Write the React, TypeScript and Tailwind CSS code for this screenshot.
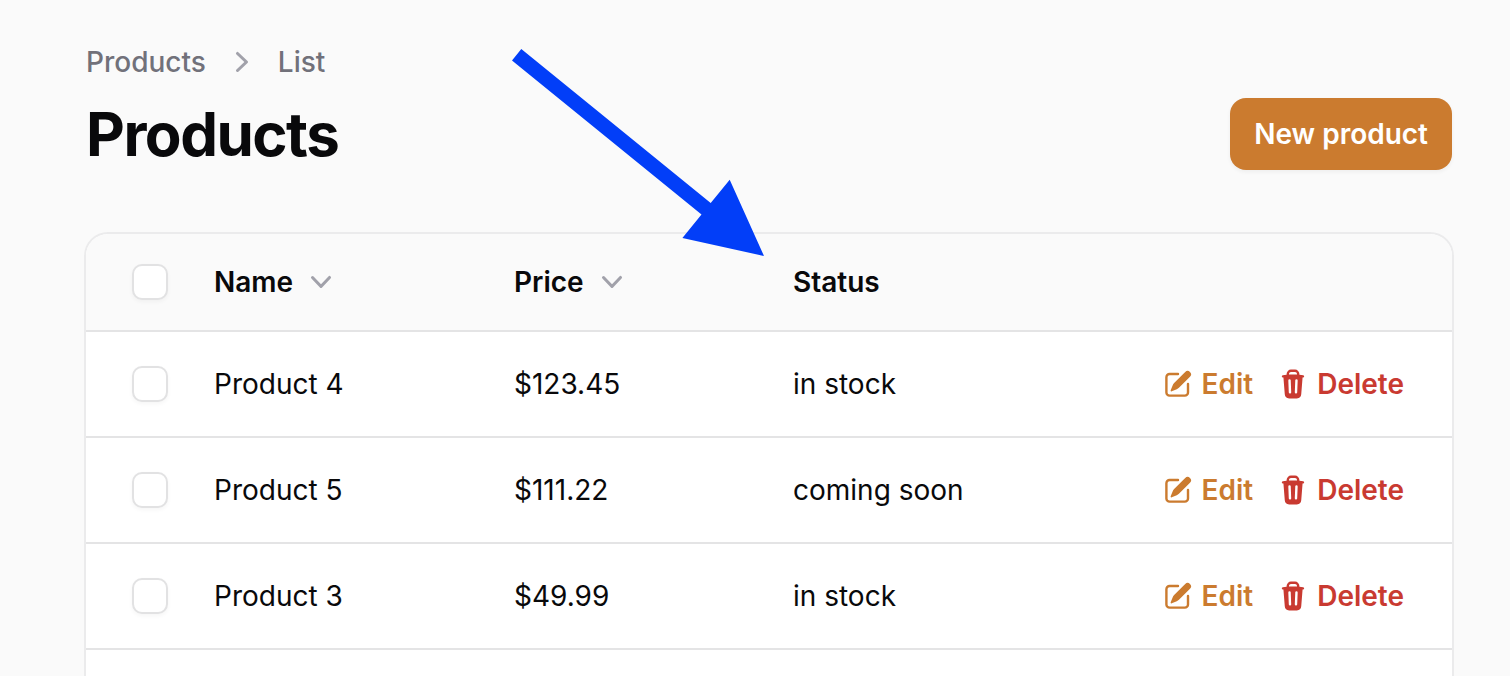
import { HiMiniPencilSquare, HiMiniTrash } from "react-icons/hi2";

type Product = { id: number; name: string; price: string; status: string };

const products: Product[] = [
  { id: 4, name: "Product 4", price: "$123.45", status: "in stock" },
  { id: 5, name: "Product 5", price: "$111.22", status: "coming soon" },
  { id: 3, name: "Product 3", price: "$49.99", status: "in stock" },
];

function ChevronDown() {
  return (
    <svg aria-hidden="true" viewBox="0 0 20 20" fill="currentColor" className="size-10 text-[#a1a1aa]">
      <path
        fillRule="evenodd"
        clipRule="evenodd"
        d="M5.23 7.21a.75.75 0 011.06.02L10 11.168l3.71-3.938a.75.75 0 111.08 1.04l-4.25 4.5a.75.75 0 01-1.08 0l-4.25-4.5a.75.75 0 01.02-1.06z"
      />
    </svg>
  );
}

function ChevronRight() {
  return (
    <svg aria-hidden="true" viewBox="0 0 20 20" fill="currentColor" className="size-10 text-[#a1a1aa]">
      <path
        fillRule="evenodd"
        clipRule="evenodd"
        d="M7.21 14.77a.75.75 0 01.02-1.06L11.168 10 7.23 6.29a.75.75 0 111.04-1.08l4.5 4.25a.75.75 0 010 1.08l-4.5 4.25a.75.75 0 01-1.06-.02z"
      />
    </svg>
  );
}

function Checkbox({ label }: { label: string }) {
  return (
    <input
      type="checkbox"
      aria-label={label}
      className="block size-9 appearance-none rounded-[10px] border-2 border-[#e2e2e3] bg-white shadow-[0_2px_4px_rgba(0,0,0,0.04)] checked:bg-[#cb7b2f]"
    />
  );
}

function SortButton({ label }: { label: string }) {
  return (
    <button type="button" className="flex items-center gap-2 font-semibold">
      {label}
      <ChevronDown />
    </button>
  );
}

function ProductRow({ product }: { product: Product }) {
  return (
    <tr className="h-[106px] border-b-2 border-[#e4e4e5]">
      <td className="pl-[46px]">
        <Checkbox label={`Select ${product.name}`} />
      </td>
      <td className="px-6">{product.name}</td>
      <td className="px-6">{product.price}</td>
      <td className="px-6">{product.status}</td>
      <td className="pr-12 pl-6">
        <div className="flex items-center justify-end gap-6 font-semibold">
          <a href="#edit" className="flex items-center gap-2 text-[#cb7b2f]">
            <HiMiniPencilSquare className="size-8" />
            Edit
          </a>
          <button type="button" className="flex items-center gap-2 text-[#c93a31]">
            <HiMiniTrash className="size-8" />
            Delete
          </button>
        </div>
      </td>
    </tr>
  );
}

function Arrow() {
  return (
    <svg
      aria-hidden="true"
      viewBox="0 0 252 207"
      className="pointer-events-none absolute top-[49px] left-[512px] h-[207px] w-[252px]"
    >
      <path d="M9.3 0 198.700 154 217.700 130.800 252 207 170.400 189 189.500 165.500 0 11.500Z" fill="#023ef8" />
    </svg>
  );
}

export default function App() {
  return (
    <main className="relative flex min-h-screen flex-col bg-[#fafafa] pt-[42px] pr-14 pl-[84px] font-['Inter',sans-serif] text-[28px] leading-10 text-[#09090b]">
      <nav aria-label="Breadcrumb" className="pl-0.5">
        <ol className="flex items-center gap-4 font-medium text-[#71717a]">
          <li>
            <a href="#products">Products</a>
          </li>
          <li aria-hidden="true">
            <ChevronRight />
          </li>
          <li>
            <a href="#list">List</a>
          </li>
        </ol>
      </nav>

      <header className="mt-4 flex items-center justify-between px-0.5">
        <h1 className="text-[60px] leading-[72px] font-bold tracking-tight">Products</h1>
        <button
          type="button"
          className="rounded-2xl bg-[#cb7b2f] px-6 py-4 font-semibold text-white shadow-[0_2px_4px_rgba(0,0,0,0.05)]"
        >
          New product
        </button>
      </header>

      <section className="mt-[62px] flex-1 overflow-hidden rounded-t-3xl border-2 border-b-0 border-[#ebebec] bg-white">
        <table className="w-full table-fixed border-collapse text-left">
          <colgroup>
            <col className="w-[104px]" />
            <col className="w-[300px]" />
            <col className="w-[279px]" />
            <col />
            <col className="w-[340px]" />
          </colgroup>
          <thead>
            <tr className="h-[97px] border-b-2 border-[#e4e4e5] bg-[#fafafa]">
              <th className="pl-[46px]">
                <Checkbox label="Select all products" />
              </th>
              <th className="px-6 font-semibold">
                <SortButton label="Name" />
              </th>
              <th className="px-6 font-semibold">
                <SortButton label="Price" />
              </th>
              <th className="px-6 font-semibold">Status</th>
              <th aria-label="Actions" />
            </tr>
          </thead>
          <tbody>
            {products.map((product) => (
              <ProductRow key={product.id} product={product} />
            ))}
          </tbody>
        </table>
      </section>

      <Arrow />
    </main>
  );
}
